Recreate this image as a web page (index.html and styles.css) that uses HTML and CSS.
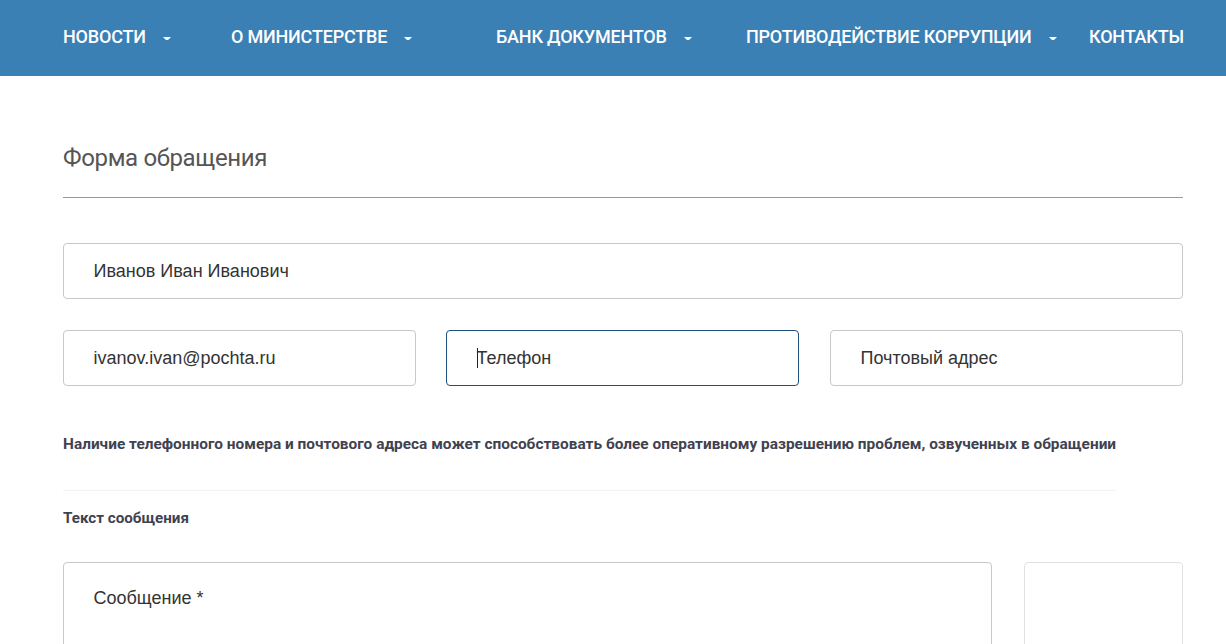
FILE: index.html
```html
<!DOCTYPE html>
<html lang="ru">
<head>
  <meta charset="UTF-8" />
  <meta name="viewport" content="width=device-width, initial-scale=1.0"/>
  <title>Форма обращения</title>
  <link rel="stylesheet" href="styles.css">
</head>
<body>

  <!-- Navbar -->
  <div class="navbar">
    <a href="#" class="nav-item">Новости <span class="nav-arrow"></span></a>
    <a href="#" class="nav-item">О министерстве <span class="nav-arrow"></span></a>
    <a href="#" class="nav-item">Банк документов <span class="nav-arrow"></span></a>
    <a href="#" class="nav-item">Противодействие коррупции <span class="nav-arrow"></span></a>
    <a href="#" class="nav-item">Контакты</a>
  </div>

  <div class="content">
    <h2 class="form-title">Форма обращения</h2>

    <div class="field">Иванов Иван Иванович</div>

    <div class="field-row">
      <div class="field">ivanov.ivan@pochta.ru</div>
      <div class="field field-focus"><span class="caret"></span>Телефон</div>
      <div class="field">Почтовый адрес</div>
    </div>

    <div class="note-block">
      <p class="note">Наличие телефонного номера и почтового адреса может способствовать более оперативному разрешению проблем, озвученных в обращении</p>
      <p class="label">Текст сообщения</p>
    </div>

    <div class="message-row">
      <div class="field message">Сообщение *</div>
      <div class="captcha"></div>
    </div>
  </div>

</body>
</html>
```

FILE: styles.css
```css
html, body {
  height: 100%;
  overflow: hidden;
}

body {
  margin: 0;
  font-family: "Liberation Sans", Arial, sans-serif;
  background-color: #fff;
  color: #333;
}

.navbar {
  display: grid;
  grid-template-columns: 168px 265px 250px 343px auto;
  align-items: center;
  box-sizing: border-box;
  height: 76px;
  padding: 0 44px 4px 63px;
  background-color: #3b80b5;
}

.nav-item {
  display: flex;
  align-items: center;
  color: #fff;
  font-family: Roboto, sans-serif;
  font-size: 18px;
  font-weight: 500;
  letter-spacing: -0.2px;
  text-transform: uppercase;
  text-decoration: none;
  white-space: nowrap;
}

.nav-arrow {
  width: 2px;
  height: 0;
  margin: 4px 0 0 17px;
  border-top: 3px solid #fff;
  border-left: 3px solid transparent;
  border-right: 3px solid transparent;
}

.content {
  padding: 0 43px 0 63px;
}

.form-title {
  margin: 0;
  padding: 68px 0 24px;
  border-bottom: 1px solid #999;
  color: #555;
  font-family: Roboto, sans-serif;
  font-size: 24px;
  font-weight: 400;
  letter-spacing: -0.35px;
  line-height: 29px;
}

.field {
  box-sizing: border-box;
  height: 56px;
  padding: 0 30px 0 29.5px;
  border: 1px solid #c8c8c8;
  border-radius: 4px;
  font-size: 18px;
  line-height: 54px;
}

.form-title + .field {
  margin-top: 45px;
}

.field-row {
  display: grid;
  grid-template-columns: 353px 353px 1fr;
  column-gap: 30px;
  margin-top: 31px;
}

.field-row .field:last-child {
  margin-left: 1px;
}

.field-focus {
  border-color: #1c4f7c;
}

.caret {
  display: inline-block;
  width: 1px;
  height: 20px;
  margin-right: -1px;
  background-color: #222;
  vertical-align: -4px;
}

.note-block {
  width: 1053px;
}

.note {
  margin: 0;
  padding: 48px 0 36px;
  border-bottom: 1px solid #f3f3f3;
  color: #3f4250;
  font-family: Roboto, sans-serif;
  font-size: 15.4px;
  font-weight: 700;
  letter-spacing: 0.015px;
  line-height: 20px;
  white-space: nowrap;
}

.label {
  margin: 0;
  padding-top: 17px;
  color: #3f4250;
  font-family: Roboto, sans-serif;
  font-size: 15.2px;
  font-weight: 700;
  line-height: 20px;
}

.message-row {
  display: flex;
  gap: 32px;
  margin-top: 34px;
}

.message {
  flex: 1;
  height: 200px;
  padding-top: 8px;
}

.captcha {
  box-sizing: border-box;
  width: 159px;
  height: 200px;
  border: 1px solid #e2e2e6;
  border-radius: 4px;
}
```
